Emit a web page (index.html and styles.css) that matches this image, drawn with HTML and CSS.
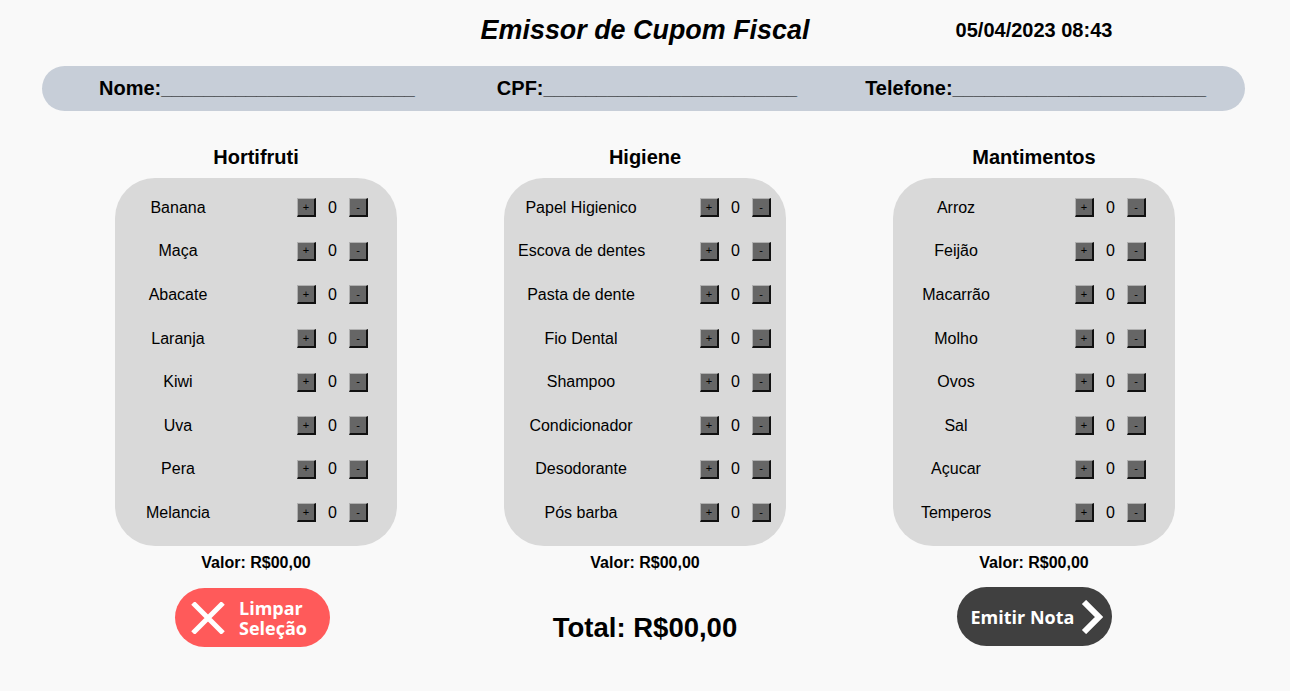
FILE: index.html
```html
<!DOCTYPE html>
<html lang="pt-BR">
<head>
<meta charset="utf-8">
<title>Emissor de Cupom Fiscal</title>
<link rel="stylesheet" href="styles.css">
</head>
<body>
<header class="top">
  <div></div>
  <h1 class="title">Emissor de Cupom Fiscal</h1>
  <div class="date">05/04/2023 08:43</div>
</header>

<div class="client">
  <span class="field"><span class="label">Nome:</span><span class="line">________________________</span></span>
  <span class="field field-cpf"><span class="label">CPF:</span><span class="line">________________________</span></span>
  <span class="field field-tel"><span class="label">Telefone:</span><span class="line">________________________</span></span>
</div>

<main class="columns">
  <section class="col">
    <h2 class="col-title">Hortifruti</h2>
    <div class="card">
      <div class="row"><span class="name">Banana</span><span class="btn">+</span><span class="qty">0</span><span class="btn">-</span></div>
      <div class="row"><span class="name">Maça</span><span class="btn">+</span><span class="qty">0</span><span class="btn">-</span></div>
      <div class="row"><span class="name">Abacate</span><span class="btn">+</span><span class="qty">0</span><span class="btn">-</span></div>
      <div class="row"><span class="name">Laranja</span><span class="btn">+</span><span class="qty">0</span><span class="btn">-</span></div>
      <div class="row"><span class="name">Kiwi</span><span class="btn">+</span><span class="qty">0</span><span class="btn">-</span></div>
      <div class="row"><span class="name">Uva</span><span class="btn">+</span><span class="qty">0</span><span class="btn">-</span></div>
      <div class="row"><span class="name">Pera</span><span class="btn">+</span><span class="qty">0</span><span class="btn">-</span></div>
      <div class="row"><span class="name">Melancia</span><span class="btn">+</span><span class="qty">0</span><span class="btn">-</span></div>
    </div>
    <div class="valor">Valor: R$00,00</div>
    <button class="action action-clear">
      <svg class="x-icon" width="34" height="32" viewBox="0 0 34 32"><path d="M2 1 L32 31 M32 1 L2 31" stroke="#fff" stroke-width="5" fill="none"/></svg>
      <span class="action-text"><span class="action-line">Limpar</span><span class="action-line">Seleção</span></span>
    </button>
  </section>

  <section class="col">
    <h2 class="col-title">Higiene</h2>
    <div class="card card-wide">
      <div class="row"><span class="name">Papel Higienico</span><span class="btn">+</span><span class="qty">0</span><span class="btn">-</span></div>
      <div class="row"><span class="name">Escova de dentes</span><span class="btn">+</span><span class="qty">0</span><span class="btn">-</span></div>
      <div class="row"><span class="name">Pasta de dente</span><span class="btn">+</span><span class="qty">0</span><span class="btn">-</span></div>
      <div class="row"><span class="name">Fio Dental</span><span class="btn">+</span><span class="qty">0</span><span class="btn">-</span></div>
      <div class="row"><span class="name">Shampoo</span><span class="btn">+</span><span class="qty">0</span><span class="btn">-</span></div>
      <div class="row"><span class="name">Condicionador</span><span class="btn">+</span><span class="qty">0</span><span class="btn">-</span></div>
      <div class="row"><span class="name">Desodorante</span><span class="btn">+</span><span class="qty">0</span><span class="btn">-</span></div>
      <div class="row"><span class="name">Pós barba</span><span class="btn">+</span><span class="qty">0</span><span class="btn">-</span></div>
    </div>
    <div class="valor">Valor: R$00,00</div>
    <div class="total">Total: R$00,00</div>
  </section>

  <section class="col">
    <h2 class="col-title">Mantimentos</h2>
    <div class="card">
      <div class="row"><span class="name">Arroz</span><span class="btn">+</span><span class="qty">0</span><span class="btn">-</span></div>
      <div class="row"><span class="name">Feijão</span><span class="btn">+</span><span class="qty">0</span><span class="btn">-</span></div>
      <div class="row"><span class="name">Macarrão</span><span class="btn">+</span><span class="qty">0</span><span class="btn">-</span></div>
      <div class="row"><span class="name">Molho</span><span class="btn">+</span><span class="qty">0</span><span class="btn">-</span></div>
      <div class="row"><span class="name">Ovos</span><span class="btn">+</span><span class="qty">0</span><span class="btn">-</span></div>
      <div class="row"><span class="name">Sal</span><span class="btn">+</span><span class="qty">0</span><span class="btn">-</span></div>
      <div class="row"><span class="name">Açucar</span><span class="btn">+</span><span class="qty">0</span><span class="btn">-</span></div>
      <div class="row"><span class="name">Temperos</span><span class="btn">+</span><span class="qty">0</span><span class="btn">-</span></div>
    </div>
    <div class="valor">Valor: R$00,00</div>
    <button class="action action-emit">
      <span class="action-text">Emitir Nota</span>
      <svg class="chev" width="22" height="34" viewBox="0 0 22 34"><path d="M3 2 L18 17 L3 32" stroke="#fff" stroke-width="6" fill="none"/></svg>
    </button>
  </section>
</main>
</body>
</html>
```

FILE: styles.css
```css
* { box-sizing: border-box; }

body {
  margin: 0;
  background: #f9f9f9;
  font-family: "Liberation Sans", Arial, sans-serif;
  color: #000;
}

.top {
  width: 1167px;
  margin: 0 auto;
  height: 60px;
  display: grid;
  grid-template-columns: repeat(3, 1fr);
  align-items: center;
}

.title {
  margin: 0;
  text-align: center;
  font-size: 26.9px;
  font-weight: bold;
  font-style: italic;
  line-height: 32px;
}

.date {
  text-align: center;
  font-size: 20px;
  font-weight: bold;
}

.client {
  margin: 6px 45px 0 42px;
  height: 45px;
  border-radius: 23px;
  background: #c7ced8;
  display: flex;
  align-items: center;
  padding-left: 57px;
}

.field {
  font-weight: bold;
  white-space: pre;
}

.label { font-size: 20px; }
.line { font-size: 19px; }

.field-cpf { margin-left: 82px; }
.field-tel { margin-left: 68px; }

.columns {
  width: 1167px;
  margin: 34px auto 0;
  display: grid;
  grid-template-columns: repeat(3, 1fr);
}

.col {
  display: flex;
  flex-direction: column;
  align-items: center;
}

.col-title {
  margin: 0;
  font-size: 20px;
  line-height: 24px;
  font-weight: bold;
}

.card {
  margin-top: 9px;
  width: 282px;
  height: 368px;
  border-radius: 40px;
  background: #d9d9d9;
  padding: 8px 0 0 0;
}

.card-wide { padding-left: 14px; }

.row {
  height: 43.6px;
  display: flex;
  align-items: center;
}

.name {
  width: 126px;
  text-align: center;
  font-size: 16px;
  white-space: nowrap;
}

.btn {
  width: 19px;
  height: 19px;
  background: #666;
  border-style: solid;
  border-width: 1px 2px 2px 1px;
  border-color: #b0b0b0 #111 #111 #b0b0b0;
  font-size: 11px;
  line-height: 1;
  color: #000;
  display: flex;
  align-items: center;
  justify-content: center;
}

.row .btn:nth-child(2) { margin-left: 56px; }

.qty {
  width: 33px;
  text-align: center;
  font-size: 16px;
}

.valor {
  margin-top: 7px;
  font-size: 16px;
  line-height: 20px;
  font-weight: bold;
}

.action {
  border: none;
  height: 59px;
  width: 155px;
  border-radius: 30px;
  display: flex;
  align-items: center;
  color: #fff;
  font-family: "Open Sans", sans-serif;
  font-weight: bold;
  font-size: 18px;
  padding: 0;
  cursor: pointer;
}

.action-clear {
  margin-top: 15px;
  margin-right: 7px;
  background: #ff5a5a;
  padding-left: 16px;
}

.action-clear .action-text {
  margin-left: 14px;
  display: flex;
  flex-direction: column;
  align-items: flex-start;
}

.action-line {
  display: block;
  height: 20px;
  line-height: 20px;
}

.x-icon { flex: none; }

.action-emit {
  margin-top: 14px;
  background: #404040;
  padding-left: 14px;
}

.chev {
  margin-left: 7px;
  flex: none;
}

.total {
  margin-top: 39px;
  font-size: 27.5px;
  line-height: 32px;
  font-weight: bold;
}
```
